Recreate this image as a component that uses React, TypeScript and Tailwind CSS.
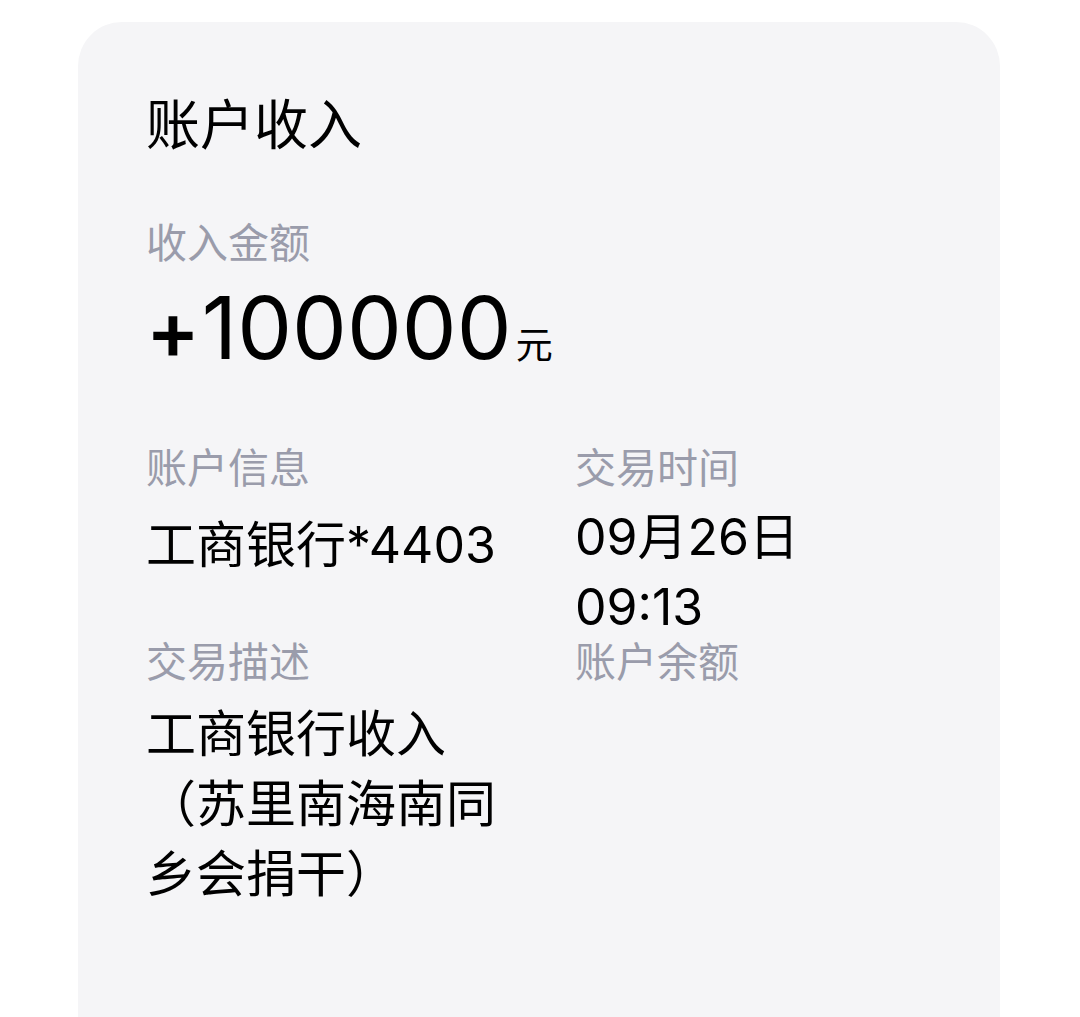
const cjk = { fontFamily: '"Noto Sans CJK SC", "Noto Sans", sans-serif' };
const mixed = { fontFamily: 'Inter, "Noto Sans CJK SC", sans-serif' };

function Field({
  label,
  valueClass = "mt-[19px] leading-[64px]",
  children,
}: {
  label: string;
  valueClass?: string;
  children?: React.ReactNode;
}) {
  return (
    <div className="flex flex-col">
      <div className="text-[41px] leading-[41px] text-[#9a9cab]" style={cjk}>
        {label}
      </div>
      {children && (
        <div className={`text-[50px] text-black ${valueClass}`} style={mixed}>
          {children}
        </div>
      )}
    </div>
  );
}

export default function App() {
  return (
    <div className="min-h-[1017px] bg-white pt-[22px]" style={cjk}>
      <div className="ml-[78px] h-[1100px] w-[922px] rounded-[44px] bg-[#f5f5f7] pl-[68px] pt-[62px]">
        <h1 className="text-[54px] font-normal leading-[76px] text-black">账户收入</h1>

        <div className="mt-[50px] text-[41px] leading-[60px] text-[#9a9cab]">收入金额</div>
        <div className="mt-[5px] flex items-baseline text-black" style={mixed}>
          <span className="text-[80px] font-semibold leading-[105px]">+</span>
          <span className="ml-[2px] text-[87px] font-normal leading-[105px]">100000</span>
          <span className="ml-[4px] text-[37px] leading-none" style={cjk}>
            元
          </span>
        </div>

        <div className="mt-[63px] grid grid-cols-[380px_1fr] gap-x-[49px]">
          <Field label="账户信息" valueClass="mt-[27px] leading-[64px]">
            工商银行*4403
          </Field>
          <Field label="交易时间">
            <div className="flex flex-col gap-[6px]">
              <span>09月26日</span>
              <span>09:13</span>
            </div>
          </Field>
          <Field label="交易描述" valueClass="mt-[19px] leading-[70px]">
            工商银行收入（苏里南海南同乡会捐干）
          </Field>
          <Field label="账户余额" />
        </div>
      </div>
    </div>
  );
}
